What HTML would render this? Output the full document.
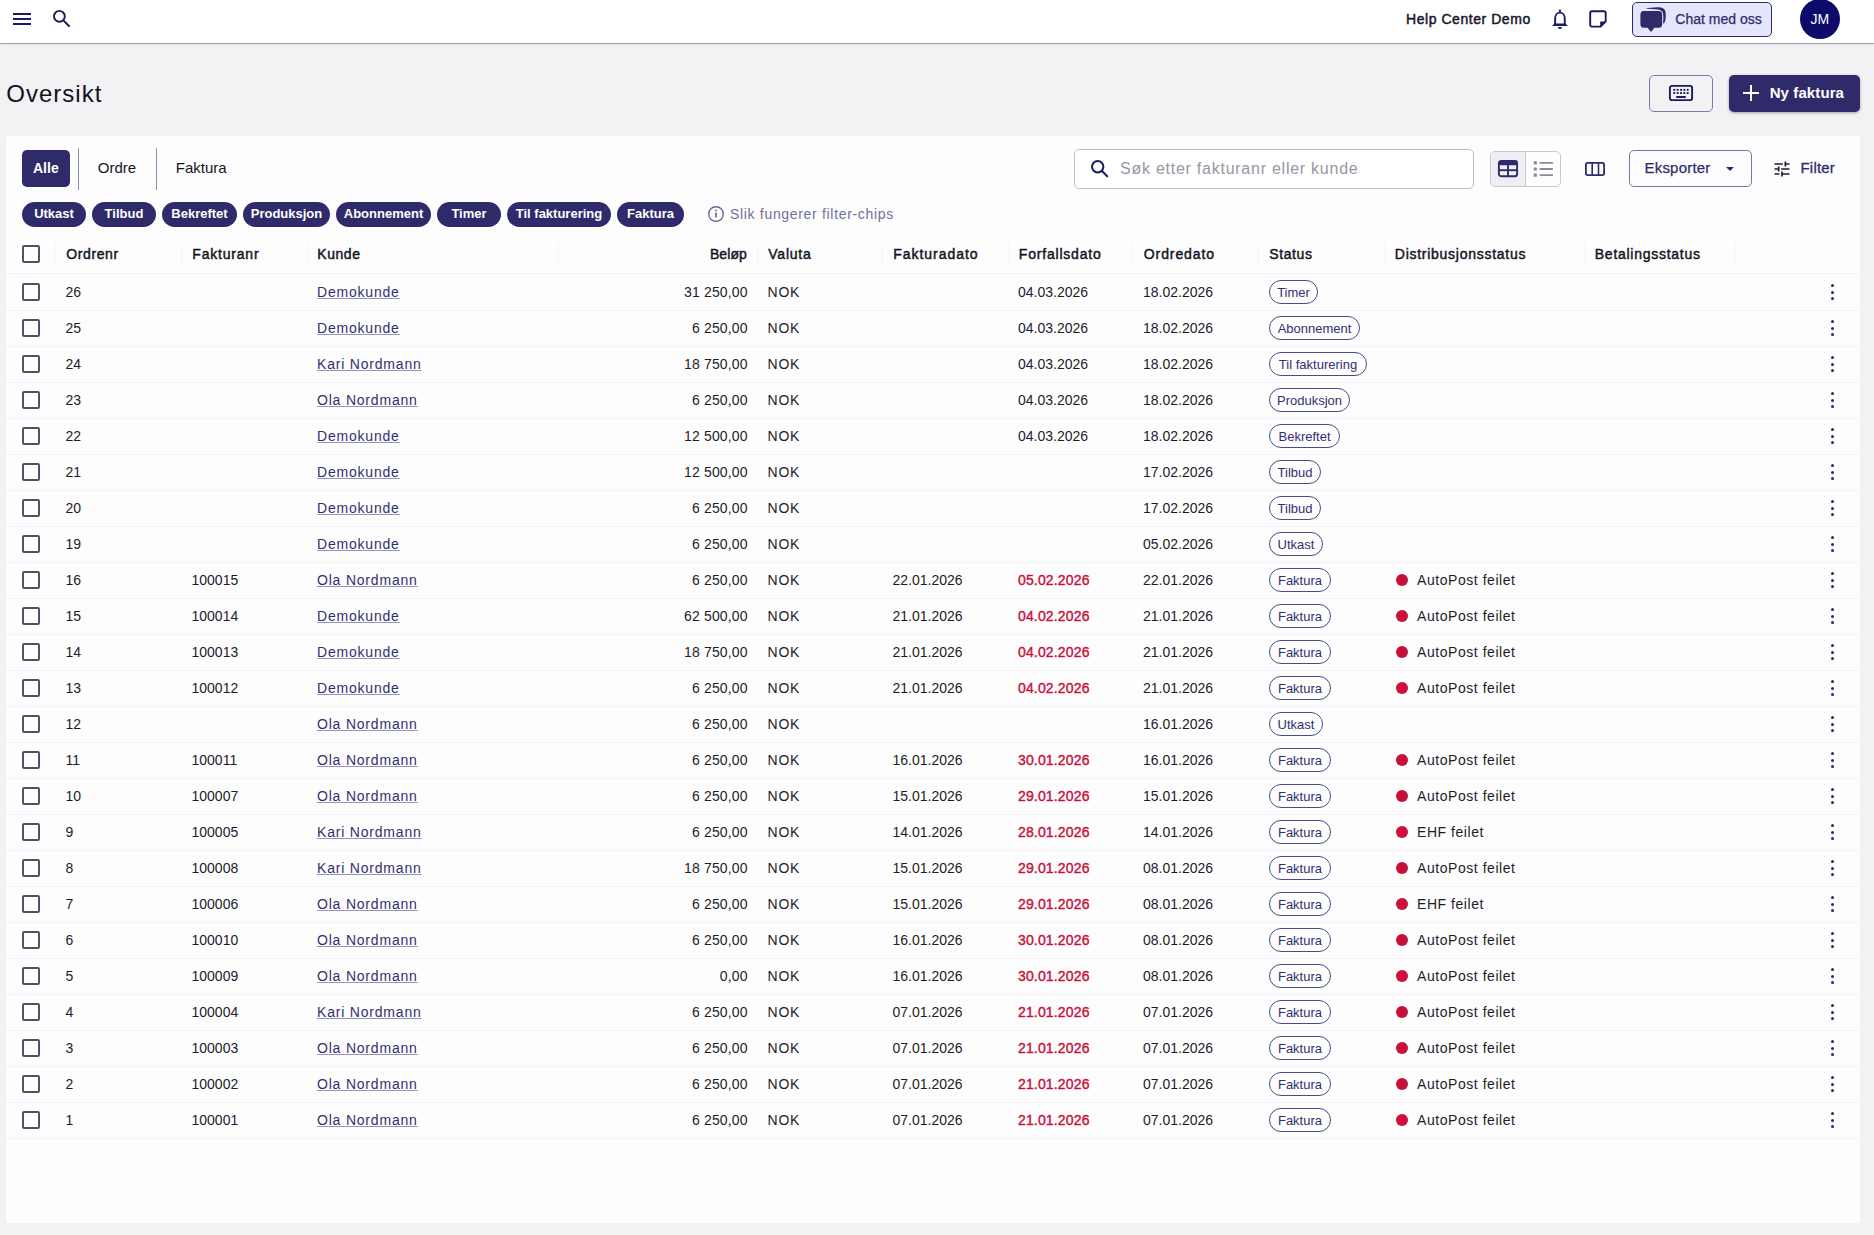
<!DOCTYPE html>
<html><head><meta charset="utf-8"><title>Oversikt</title>
<style>
html,body{margin:0;padding:0}
body{width:1874px;height:1235px;overflow:hidden;background:#f2f2f4;position:relative;font-family:"Liberation Sans",sans-serif;color:#1d1c29}
.abs{position:absolute}
.t{position:absolute;white-space:nowrap}
#hdr{position:absolute;left:0;top:0;width:1874px;height:43px;background:#fff;border-bottom:1px solid #a4a4a6;box-shadow:0 1px 2px rgba(0,0,0,.06)}
#panel{position:absolute;left:6px;top:136px;width:1854px;height:1087px;background:#fdfdfe;border-radius:3px}
.chip{position:absolute;top:202px;height:25px;border-radius:13px;background:#2f2b6b;color:#fff;font-weight:700;font-size:13px;line-height:23px;text-align:center;white-space:nowrap}
.cb{position:absolute;left:22px;width:14px;height:14px;border:2px solid #535168;border-radius:2px}
.pill{position:absolute;left:1269px;height:22px;border:1px solid #4d4a86;border-radius:12px;color:#333070;font-size:13px;line-height:23px;text-align:center;white-space:nowrap}
.lk{text-decoration:underline;text-decoration-color:#9593bf;text-underline-offset:1.2px}
</style></head><body>
<div id="hdr"></div>
<div class="abs" style="left:13px;top:13px;width:18px;height:2px;background:#1c1a5e"></div>
<div class="abs" style="left:13px;top:18px;width:18px;height:2px;background:#1c1a5e"></div>
<div class="abs" style="left:13px;top:23px;width:18px;height:2px;background:#1c1a5e"></div>
<svg class="abs" style="left:50px;top:7px" width="24" height="24" viewBox="0 0 24 24"><circle cx="9.4" cy="9.3" r="5.4" fill="none" stroke="#1c1a5e" stroke-width="1.9"/><line x1="13.4" y1="13.4" x2="19" y2="19" stroke="#1c1a5e" stroke-width="2" stroke-linecap="round"/></svg>
<div class="t" style="left:1406.00px;top:12.35px;font-size:14px;line-height:14px;color:#16152a;letter-spacing:0.55px;-webkit-text-stroke:0.45px #16152a;">Help Center Demo</div>
<svg class="abs" style="left:1550px;top:7px" width="20" height="24" viewBox="0 0 20 24"><path d="M5.15 17.2V11.5C5.15 8 7.2 5.65 9.95 5.65C12.7 5.65 14.75 8 14.75 11.5V17.2" fill="none" stroke="#1c1a5e" stroke-width="1.9"/><path d="M2.1 18.9H17.9L15.5 16.6H4.4Z" fill="#1c1a5e"/><circle cx="9.95" cy="3.7" r="1.25" fill="#1c1a5e"/><path d="M7.9 20H12A2.05 2 0 0 1 7.9 20Z" fill="#1c1a5e"/></svg>
<svg class="abs" style="left:1587px;top:8px" width="22" height="22" viewBox="0 0 22 22"><path d="M5 3.2H16.8Q18.7 3.2 18.7 5.1V13.4L13.6 18.6H5Q3.2 18.6 3.2 16.8V5Q3.2 3.2 5 3.2Z" fill="none" stroke="#1c1a5e" stroke-width="1.9" stroke-linejoin="round"/><path d="M13.2 19.3V14.3Q13.2 13.6 13.9 13.6H19.2Z" fill="#1c1a5e"/></svg>
<div class="abs" style="left:1632px;top:2px;width:138px;height:33px;border:1px solid #2f2b6b;border-radius:5px;background:#e5e5fb"></div>
<svg class="abs" style="left:1638px;top:5px" width="30" height="30" viewBox="0 0 30 30"><path d="M7 3.8Q12 2.0 21 2.2Q27.6 2.6 27.7 8L27.7 13Q27.5 17 26 18.6L25.1 18.2Q25.6 12 25.1 8.6Q24.2 5 20 4.5Q12 3.7 7 3.8Z" fill="#2f2b6b"/><path d="M5.6 6H21Q24.2 6 24.2 10V19Q24.2 22.8 21 22.8H16.4L13 27L9.6 22.8H5.6Q2.4 22.8 2.4 19V10Q2.4 6 5.6 6Z" fill="#2f2b6b"/></svg>
<div class="t" style="left:1675.30px;top:12.05px;font-size:14px;line-height:14px;color:#2f2b6b;-webkit-text-stroke:0.25px #2f2b6b;">Chat med oss</div>
<div class="abs" style="left:1800px;top:-1px;width:40px;height:40px;border-radius:50%;background:#0c0b6a"></div>
<div class="t" style="left:1810.50px;top:12.35px;font-size:14px;line-height:14px;color:#ffffff;">JM</div>
<div class="t" style="left:6.30px;top:81.68px;font-size:24px;line-height:24px;color:#121120;letter-spacing:1px;">Oversikt</div>
<div class="abs" style="left:1649px;top:75px;width:62px;height:35px;border:1px solid #7d79a8;border-radius:5px"></div>
<svg class="abs" style="left:1668px;top:84px" width="26" height="18" viewBox="0 0 26 18"><rect x="1.9" y="1.9" width="22.2" height="14.2" rx="2.2" fill="none" stroke="#1c1a5e" stroke-width="1.9"/><rect x="5.3" y="4.9" width="1.9" height="1.9" fill="#1c1a5e"/><rect x="8.7" y="4.9" width="1.9" height="1.9" fill="#1c1a5e"/><rect x="12.1" y="4.9" width="1.9" height="1.9" fill="#1c1a5e"/><rect x="15.4" y="4.9" width="1.9" height="1.9" fill="#1c1a5e"/><rect x="18.7" y="4.9" width="1.9" height="1.9" fill="#1c1a5e"/><rect x="5.3" y="8.1" width="1.9" height="1.9" fill="#1c1a5e"/><rect x="8.7" y="8.1" width="1.9" height="1.9" fill="#1c1a5e"/><rect x="12.1" y="8.1" width="1.9" height="1.9" fill="#1c1a5e"/><rect x="15.4" y="8.1" width="1.9" height="1.9" fill="#1c1a5e"/><rect x="18.7" y="8.1" width="1.9" height="1.9" fill="#1c1a5e"/><rect x="8" y="12" width="10" height="1.9" rx="0.9" fill="#1c1a5e"/></svg>
<div class="abs" style="left:1729px;top:75px;width:131px;height:37px;border-radius:5px;background:#2f2b6b;box-shadow:0 1px 3px rgba(0,0,0,.35)"></div>
<div class="abs" style="left:1750px;top:85px;width:2px;height:16px;background:#fff"></div>
<div class="abs" style="left:1743px;top:92px;width:16px;height:2px;background:#fff"></div>
<div class="t" style="left:1769.70px;top:84.80px;font-size:15px;line-height:15px;font-weight:700;color:#ffffff;letter-spacing:0.1px;">Ny faktura</div>
<div id="panel"></div>
<div class="abs" style="left:22px;top:150px;width:48px;height:37px;border-radius:5px;background:#2f2b6b"></div>
<div class="t" style="left:33.00px;top:161.15px;font-size:14px;line-height:14px;font-weight:700;color:#ffffff;">Alle</div>
<div class="abs" style="left:78px;top:148px;width:1px;height:42px;background:#8f8cb2"></div>
<div class="abs" style="left:156px;top:148px;width:1px;height:42px;background:#8f8cb2"></div>
<div class="t" style="left:97.80px;top:159.80px;font-size:15px;line-height:15px;color:#151424;">Ordre</div>
<div class="t" style="left:175.80px;top:159.80px;font-size:15px;line-height:15px;color:#151424;">Faktura</div>
<div class="chip" style="left:22px;width:64px">Utkast</div>
<div class="chip" style="left:92px;width:64px">Tilbud</div>
<div class="chip" style="left:162px;width:75px">Bekreftet</div>
<div class="chip" style="left:243px;width:87px">Produksjon</div>
<div class="chip" style="left:336px;width:95px">Abonnement</div>
<div class="chip" style="left:437px;width:64px">Timer</div>
<div class="chip" style="left:507px;width:104px">Til fakturering</div>
<div class="chip" style="left:617px;width:67px">Faktura</div>
<svg class="abs" style="left:706px;top:204px" width="20" height="20" viewBox="0 0 20 20"><circle cx="10" cy="10" r="7.3" fill="none" stroke="#6b6799" stroke-width="1.4"/><circle cx="10" cy="6.4" r="0.95" fill="#6b6799"/><rect x="9.15" y="8.6" width="1.7" height="5" rx="0.5" fill="#6b6799"/></svg>
<div class="t" style="left:730.00px;top:207.15px;font-size:14px;line-height:14px;color:#736f9a;letter-spacing:0.68px;">Slik fungerer filter-chips</div>
<div class="abs" style="left:1074px;top:149px;width:398px;height:38px;border:1px solid #bdbcc6;border-radius:5px;background:#fff"></div>
<svg class="abs" style="left:1087px;top:156px" width="26" height="26" viewBox="0 0 26 26"><circle cx="10.7" cy="10.8" r="5.7" fill="none" stroke="#1c1a5e" stroke-width="2.0"/><line x1="15" y1="15.1" x2="20.2" y2="20.3" stroke="#1c1a5e" stroke-width="2.1" stroke-linecap="round"/></svg>
<div class="t" style="left:1120.00px;top:160.96px;font-size:16px;line-height:16px;color:#9796a3;letter-spacing:0.75px;">Søk etter fakturanr eller kunde</div>
<div class="abs" style="left:1490px;top:151px;width:69px;height:34px;border:1px solid #c9c8d0;border-radius:5px;overflow:hidden"><div style="position:absolute;left:0;top:0;width:34px;height:34px;background:#efeef5;border-right:1px solid #c9c8d0"></div></div>
<svg class="abs" style="left:1497px;top:159px" width="22" height="20" viewBox="0 0 22 20"><rect x="1.9" y="1.9" width="18.2" height="15.4" rx="2.4" fill="none" stroke="#2f2b6b" stroke-width="1.9"/><rect x="1.5" y="1.5" width="19" height="4.8" rx="1.8" fill="#2f2b6b"/><line x1="11" y1="5" x2="11" y2="17" stroke="#2f2b6b" stroke-width="1.9"/><line x1="2" y1="11.2" x2="20" y2="11.2" stroke="#2f2b6b" stroke-width="1.9"/></svg>
<svg class="abs" style="left:1532px;top:160px" width="24" height="20" viewBox="0 0 24 20"><rect x="1.7" y="1.2" width="3.2" height="3.2" rx="0.6" fill="#8b8998"/><rect x="7.6" y="1.9" width="13.4" height="1.8" rx="0.5" fill="#8b8998"/><rect x="1.7" y="7.4" width="3.2" height="3.2" rx="0.6" fill="#8b8998"/><rect x="7.6" y="8.1" width="13.4" height="1.8" rx="0.5" fill="#8b8998"/><rect x="1.7" y="13.6" width="3.2" height="3.2" rx="0.6" fill="#8b8998"/><rect x="7.6" y="14.3" width="13.4" height="1.8" rx="0.5" fill="#8b8998"/></svg>
<svg class="abs" style="left:1583px;top:160px" width="24" height="18" viewBox="0 0 24 18"><rect x="2.9" y="2.9" width="18.2" height="12.2" rx="1.8" fill="none" stroke="#2f2b6b" stroke-width="1.8"/><line x1="9.2" y1="3" x2="9.2" y2="15" stroke="#2f2b6b" stroke-width="1.6"/><line x1="15.5" y1="3" x2="15.5" y2="15" stroke="#2f2b6b" stroke-width="1.6"/></svg>
<div class="abs" style="left:1629px;top:150px;width:121px;height:35px;border:1px solid #7a76a8;border-radius:5px"></div>
<div class="t" style="left:1644.50px;top:159.60px;font-size:15px;line-height:15px;color:#2f2b6b;letter-spacing:0.2px;-webkit-text-stroke:0.25px #2f2b6b;">Eksporter</div>
<div class="abs" style="left:1725.5px;top:167px;width:0;height:0;border-left:4.5px solid transparent;border-right:4.5px solid transparent;border-top:4.5px solid #2f2b6b"></div>
<svg class="abs" style="left:1771.5px;top:159px" width="20" height="20" viewBox="0 0 24 24"><path fill="#1e1d2c" d="M3 17v2h6v-2H3zM3 5v2h10V5H3zm10 16v-2h8v-2h-8v-2h-2v6h2zM7 9v2H3v2h4v2h2V9H7zm14 4v-2H11v2h10zm-6-4h2V7h4V5h-4V3h-2v6z"/></svg>
<div class="t" style="left:1800.50px;top:159.70px;font-size:15px;line-height:15px;color:#2f2b6b;letter-spacing:0.2px;-webkit-text-stroke:0.3px #2f2b6b;">Filter</div>
<div class="cb" style="top:245px"></div>
<div class="abs" style="left:55px;top:242px;width:1px;height:24px;background:#f6f6f7"></div>
<div class="abs" style="left:181px;top:242px;width:1px;height:24px;background:#f6f6f7"></div>
<div class="abs" style="left:307px;top:242px;width:1px;height:24px;background:#f6f6f7"></div>
<div class="abs" style="left:558px;top:242px;width:1px;height:24px;background:#f6f6f7"></div>
<div class="abs" style="left:757px;top:242px;width:1px;height:24px;background:#f6f6f7"></div>
<div class="abs" style="left:882px;top:242px;width:1px;height:24px;background:#f6f6f7"></div>
<div class="abs" style="left:1008px;top:242px;width:1px;height:24px;background:#f6f6f7"></div>
<div class="abs" style="left:1132px;top:242px;width:1px;height:24px;background:#f6f6f7"></div>
<div class="abs" style="left:1258px;top:242px;width:1px;height:24px;background:#f6f6f7"></div>
<div class="abs" style="left:1384px;top:242px;width:1px;height:24px;background:#f6f6f7"></div>
<div class="abs" style="left:1584px;top:242px;width:1px;height:24px;background:#f6f6f7"></div>
<div class="abs" style="left:1735px;top:242px;width:1px;height:24px;background:#f6f6f7"></div>
<div class="t" style="left:66.30px;top:246.85px;font-size:14px;line-height:14px;color:#151424;letter-spacing:0.6px;-webkit-text-stroke:0.45px #151424;">Ordrenr</div>
<div class="t" style="left:192.30px;top:246.85px;font-size:14px;line-height:14px;color:#151424;letter-spacing:0.8px;-webkit-text-stroke:0.45px #151424;">Fakturanr</div>
<div class="t" style="left:317.30px;top:246.85px;font-size:14px;line-height:14px;color:#151424;letter-spacing:0.55px;-webkit-text-stroke:0.45px #151424;">Kunde</div>
<div class="t" style="right:1127.00px;top:246.85px;font-size:14px;line-height:14px;color:#151424;letter-spacing:0.1px;-webkit-text-stroke:0.45px #151424;">Beløp</div>
<div class="t" style="left:768.30px;top:246.85px;font-size:14px;line-height:14px;color:#151424;letter-spacing:0.75px;-webkit-text-stroke:0.45px #151424;">Valuta</div>
<div class="t" style="left:893.30px;top:246.85px;font-size:14px;line-height:14px;color:#151424;letter-spacing:0.95px;-webkit-text-stroke:0.45px #151424;">Fakturadato</div>
<div class="t" style="left:1018.80px;top:246.85px;font-size:14px;line-height:14px;color:#151424;letter-spacing:0.8px;-webkit-text-stroke:0.45px #151424;">Forfallsdato</div>
<div class="t" style="left:1143.80px;top:246.85px;font-size:14px;line-height:14px;color:#151424;letter-spacing:0.9px;-webkit-text-stroke:0.45px #151424;">Ordredato</div>
<div class="t" style="left:1269.30px;top:246.85px;font-size:14px;line-height:14px;color:#151424;letter-spacing:0.6px;-webkit-text-stroke:0.45px #151424;">Status</div>
<div class="t" style="left:1394.80px;top:246.85px;font-size:14px;line-height:14px;color:#151424;letter-spacing:0.73px;-webkit-text-stroke:0.45px #151424;">Distribusjonsstatus</div>
<div class="t" style="left:1594.80px;top:246.85px;font-size:14px;line-height:14px;color:#151424;letter-spacing:0.73px;-webkit-text-stroke:0.45px #151424;">Betalingsstatus</div>
<div class="abs" style="left:6px;top:273px;width:1854px;height:1px;background:#f3f3f5"></div>
<div class="cb" style="top:283px"></div>
<div class="t" style="left:65.50px;top:285.15px;font-size:14px;line-height:14px;color:#1d1c29;">26</div>
<div class="t" style="left:317.00px;top:285.15px;font-size:14px;line-height:14px;color:#333070;letter-spacing:0.8px;"><span class="lk">Demokunde</span></div>
<div class="t" style="right:1126.30px;top:285.15px;font-size:14px;line-height:14px;color:#1d1c29;letter-spacing:0.15px;">31 250,00</div>
<div class="t" style="left:767.50px;top:285.15px;font-size:14px;line-height:14px;color:#1d1c29;letter-spacing:0.8px;">NOK</div>
<div class="t" style="left:1018.00px;top:285.15px;font-size:14px;line-height:14px;color:#1d1c29;">04.03.2026</div>
<div class="t" style="left:1143.00px;top:285.15px;font-size:14px;line-height:14px;color:#1d1c29;">18.02.2026</div>
<div class="pill" style="top:280px;width:47px">Timer</div>
<div class="abs" style="left:1830.5px;top:284.20px;width:3px;height:3px;border-radius:50%;background:#2a2869"></div>
<div class="abs" style="left:1830.5px;top:290.50px;width:3px;height:3px;border-radius:50%;background:#2a2869"></div>
<div class="abs" style="left:1830.5px;top:296.80px;width:3px;height:3px;border-radius:50%;background:#2a2869"></div>
<div class="abs" style="left:6px;top:310px;width:1854px;height:1px;background:#f4f4f6"></div>
<div class="cb" style="top:319px"></div>
<div class="t" style="left:65.50px;top:321.15px;font-size:14px;line-height:14px;color:#1d1c29;">25</div>
<div class="t" style="left:317.00px;top:321.15px;font-size:14px;line-height:14px;color:#333070;letter-spacing:0.8px;"><span class="lk">Demokunde</span></div>
<div class="t" style="right:1126.30px;top:321.15px;font-size:14px;line-height:14px;color:#1d1c29;letter-spacing:0.15px;">6 250,00</div>
<div class="t" style="left:767.50px;top:321.15px;font-size:14px;line-height:14px;color:#1d1c29;letter-spacing:0.8px;">NOK</div>
<div class="t" style="left:1018.00px;top:321.15px;font-size:14px;line-height:14px;color:#1d1c29;">04.03.2026</div>
<div class="t" style="left:1143.00px;top:321.15px;font-size:14px;line-height:14px;color:#1d1c29;">18.02.2026</div>
<div class="pill" style="top:316px;width:89px">Abonnement</div>
<div class="abs" style="left:1830.5px;top:320.20px;width:3px;height:3px;border-radius:50%;background:#2a2869"></div>
<div class="abs" style="left:1830.5px;top:326.50px;width:3px;height:3px;border-radius:50%;background:#2a2869"></div>
<div class="abs" style="left:1830.5px;top:332.80px;width:3px;height:3px;border-radius:50%;background:#2a2869"></div>
<div class="abs" style="left:6px;top:346px;width:1854px;height:1px;background:#f4f4f6"></div>
<div class="cb" style="top:355px"></div>
<div class="t" style="left:65.50px;top:357.15px;font-size:14px;line-height:14px;color:#1d1c29;">24</div>
<div class="t" style="left:317.00px;top:357.15px;font-size:14px;line-height:14px;color:#333070;letter-spacing:0.8px;"><span class="lk">Kari Nordmann</span></div>
<div class="t" style="right:1126.30px;top:357.15px;font-size:14px;line-height:14px;color:#1d1c29;letter-spacing:0.15px;">18 750,00</div>
<div class="t" style="left:767.50px;top:357.15px;font-size:14px;line-height:14px;color:#1d1c29;letter-spacing:0.8px;">NOK</div>
<div class="t" style="left:1018.00px;top:357.15px;font-size:14px;line-height:14px;color:#1d1c29;">04.03.2026</div>
<div class="t" style="left:1143.00px;top:357.15px;font-size:14px;line-height:14px;color:#1d1c29;">18.02.2026</div>
<div class="pill" style="top:352px;width:96px">Til fakturering</div>
<div class="abs" style="left:1830.5px;top:356.20px;width:3px;height:3px;border-radius:50%;background:#2a2869"></div>
<div class="abs" style="left:1830.5px;top:362.50px;width:3px;height:3px;border-radius:50%;background:#2a2869"></div>
<div class="abs" style="left:1830.5px;top:368.80px;width:3px;height:3px;border-radius:50%;background:#2a2869"></div>
<div class="abs" style="left:6px;top:382px;width:1854px;height:1px;background:#f4f4f6"></div>
<div class="cb" style="top:391px"></div>
<div class="t" style="left:65.50px;top:393.15px;font-size:14px;line-height:14px;color:#1d1c29;">23</div>
<div class="t" style="left:317.00px;top:393.15px;font-size:14px;line-height:14px;color:#333070;letter-spacing:0.8px;"><span class="lk">Ola Nordmann</span></div>
<div class="t" style="right:1126.30px;top:393.15px;font-size:14px;line-height:14px;color:#1d1c29;letter-spacing:0.15px;">6 250,00</div>
<div class="t" style="left:767.50px;top:393.15px;font-size:14px;line-height:14px;color:#1d1c29;letter-spacing:0.8px;">NOK</div>
<div class="t" style="left:1018.00px;top:393.15px;font-size:14px;line-height:14px;color:#1d1c29;">04.03.2026</div>
<div class="t" style="left:1143.00px;top:393.15px;font-size:14px;line-height:14px;color:#1d1c29;">18.02.2026</div>
<div class="pill" style="top:388px;width:79px">Produksjon</div>
<div class="abs" style="left:1830.5px;top:392.20px;width:3px;height:3px;border-radius:50%;background:#2a2869"></div>
<div class="abs" style="left:1830.5px;top:398.50px;width:3px;height:3px;border-radius:50%;background:#2a2869"></div>
<div class="abs" style="left:1830.5px;top:404.80px;width:3px;height:3px;border-radius:50%;background:#2a2869"></div>
<div class="abs" style="left:6px;top:418px;width:1854px;height:1px;background:#f4f4f6"></div>
<div class="cb" style="top:427px"></div>
<div class="t" style="left:65.50px;top:429.15px;font-size:14px;line-height:14px;color:#1d1c29;">22</div>
<div class="t" style="left:317.00px;top:429.15px;font-size:14px;line-height:14px;color:#333070;letter-spacing:0.8px;"><span class="lk">Demokunde</span></div>
<div class="t" style="right:1126.30px;top:429.15px;font-size:14px;line-height:14px;color:#1d1c29;letter-spacing:0.15px;">12 500,00</div>
<div class="t" style="left:767.50px;top:429.15px;font-size:14px;line-height:14px;color:#1d1c29;letter-spacing:0.8px;">NOK</div>
<div class="t" style="left:1018.00px;top:429.15px;font-size:14px;line-height:14px;color:#1d1c29;">04.03.2026</div>
<div class="t" style="left:1143.00px;top:429.15px;font-size:14px;line-height:14px;color:#1d1c29;">18.02.2026</div>
<div class="pill" style="top:424px;width:69px">Bekreftet</div>
<div class="abs" style="left:1830.5px;top:428.20px;width:3px;height:3px;border-radius:50%;background:#2a2869"></div>
<div class="abs" style="left:1830.5px;top:434.50px;width:3px;height:3px;border-radius:50%;background:#2a2869"></div>
<div class="abs" style="left:1830.5px;top:440.80px;width:3px;height:3px;border-radius:50%;background:#2a2869"></div>
<div class="abs" style="left:6px;top:454px;width:1854px;height:1px;background:#f4f4f6"></div>
<div class="cb" style="top:463px"></div>
<div class="t" style="left:65.50px;top:465.15px;font-size:14px;line-height:14px;color:#1d1c29;">21</div>
<div class="t" style="left:317.00px;top:465.15px;font-size:14px;line-height:14px;color:#333070;letter-spacing:0.8px;"><span class="lk">Demokunde</span></div>
<div class="t" style="right:1126.30px;top:465.15px;font-size:14px;line-height:14px;color:#1d1c29;letter-spacing:0.15px;">12 500,00</div>
<div class="t" style="left:767.50px;top:465.15px;font-size:14px;line-height:14px;color:#1d1c29;letter-spacing:0.8px;">NOK</div>
<div class="t" style="left:1143.00px;top:465.15px;font-size:14px;line-height:14px;color:#1d1c29;">17.02.2026</div>
<div class="pill" style="top:460px;width:50px">Tilbud</div>
<div class="abs" style="left:1830.5px;top:464.20px;width:3px;height:3px;border-radius:50%;background:#2a2869"></div>
<div class="abs" style="left:1830.5px;top:470.50px;width:3px;height:3px;border-radius:50%;background:#2a2869"></div>
<div class="abs" style="left:1830.5px;top:476.80px;width:3px;height:3px;border-radius:50%;background:#2a2869"></div>
<div class="abs" style="left:6px;top:490px;width:1854px;height:1px;background:#f4f4f6"></div>
<div class="cb" style="top:499px"></div>
<div class="t" style="left:65.50px;top:501.15px;font-size:14px;line-height:14px;color:#1d1c29;">20</div>
<div class="t" style="left:317.00px;top:501.15px;font-size:14px;line-height:14px;color:#333070;letter-spacing:0.8px;"><span class="lk">Demokunde</span></div>
<div class="t" style="right:1126.30px;top:501.15px;font-size:14px;line-height:14px;color:#1d1c29;letter-spacing:0.15px;">6 250,00</div>
<div class="t" style="left:767.50px;top:501.15px;font-size:14px;line-height:14px;color:#1d1c29;letter-spacing:0.8px;">NOK</div>
<div class="t" style="left:1143.00px;top:501.15px;font-size:14px;line-height:14px;color:#1d1c29;">17.02.2026</div>
<div class="pill" style="top:496px;width:50px">Tilbud</div>
<div class="abs" style="left:1830.5px;top:500.20px;width:3px;height:3px;border-radius:50%;background:#2a2869"></div>
<div class="abs" style="left:1830.5px;top:506.50px;width:3px;height:3px;border-radius:50%;background:#2a2869"></div>
<div class="abs" style="left:1830.5px;top:512.80px;width:3px;height:3px;border-radius:50%;background:#2a2869"></div>
<div class="abs" style="left:6px;top:526px;width:1854px;height:1px;background:#f4f4f6"></div>
<div class="cb" style="top:535px"></div>
<div class="t" style="left:65.50px;top:537.15px;font-size:14px;line-height:14px;color:#1d1c29;">19</div>
<div class="t" style="left:317.00px;top:537.15px;font-size:14px;line-height:14px;color:#333070;letter-spacing:0.8px;"><span class="lk">Demokunde</span></div>
<div class="t" style="right:1126.30px;top:537.15px;font-size:14px;line-height:14px;color:#1d1c29;letter-spacing:0.15px;">6 250,00</div>
<div class="t" style="left:767.50px;top:537.15px;font-size:14px;line-height:14px;color:#1d1c29;letter-spacing:0.8px;">NOK</div>
<div class="t" style="left:1143.00px;top:537.15px;font-size:14px;line-height:14px;color:#1d1c29;">05.02.2026</div>
<div class="pill" style="top:532px;width:52px">Utkast</div>
<div class="abs" style="left:1830.5px;top:536.20px;width:3px;height:3px;border-radius:50%;background:#2a2869"></div>
<div class="abs" style="left:1830.5px;top:542.50px;width:3px;height:3px;border-radius:50%;background:#2a2869"></div>
<div class="abs" style="left:1830.5px;top:548.80px;width:3px;height:3px;border-radius:50%;background:#2a2869"></div>
<div class="abs" style="left:6px;top:562px;width:1854px;height:1px;background:#f4f4f6"></div>
<div class="cb" style="top:571px"></div>
<div class="t" style="left:65.50px;top:573.15px;font-size:14px;line-height:14px;color:#1d1c29;">16</div>
<div class="t" style="left:191.50px;top:573.15px;font-size:14px;line-height:14px;color:#1d1c29;">100015</div>
<div class="t" style="left:317.00px;top:573.15px;font-size:14px;line-height:14px;color:#333070;letter-spacing:0.8px;"><span class="lk">Ola Nordmann</span></div>
<div class="t" style="right:1126.30px;top:573.15px;font-size:14px;line-height:14px;color:#1d1c29;letter-spacing:0.15px;">6 250,00</div>
<div class="t" style="left:767.50px;top:573.15px;font-size:14px;line-height:14px;color:#1d1c29;letter-spacing:0.8px;">NOK</div>
<div class="t" style="left:892.50px;top:573.15px;font-size:14px;line-height:14px;color:#1d1c29;">22.01.2026</div>
<div class="t" style="left:1018.00px;top:573.15px;font-size:14px;line-height:14px;color:#c8103b;letter-spacing:0.15px;-webkit-text-stroke:0.4px #c8103b;">05.02.2026</div>
<div class="t" style="left:1143.00px;top:573.15px;font-size:14px;line-height:14px;color:#1d1c29;">22.01.2026</div>
<div class="pill" style="top:568px;width:60px">Faktura</div>
<div class="abs" style="left:1396px;top:574px;width:12px;height:12px;border-radius:50%;background:#c8103b"></div>
<div class="t" style="left:1417.00px;top:573.15px;font-size:14px;line-height:14px;color:#1d1c29;letter-spacing:0.55px;">AutoPost feilet</div>
<div class="abs" style="left:1830.5px;top:572.20px;width:3px;height:3px;border-radius:50%;background:#2a2869"></div>
<div class="abs" style="left:1830.5px;top:578.50px;width:3px;height:3px;border-radius:50%;background:#2a2869"></div>
<div class="abs" style="left:1830.5px;top:584.80px;width:3px;height:3px;border-radius:50%;background:#2a2869"></div>
<div class="abs" style="left:6px;top:598px;width:1854px;height:1px;background:#f4f4f6"></div>
<div class="cb" style="top:607px"></div>
<div class="t" style="left:65.50px;top:609.15px;font-size:14px;line-height:14px;color:#1d1c29;">15</div>
<div class="t" style="left:191.50px;top:609.15px;font-size:14px;line-height:14px;color:#1d1c29;">100014</div>
<div class="t" style="left:317.00px;top:609.15px;font-size:14px;line-height:14px;color:#333070;letter-spacing:0.8px;"><span class="lk">Demokunde</span></div>
<div class="t" style="right:1126.30px;top:609.15px;font-size:14px;line-height:14px;color:#1d1c29;letter-spacing:0.15px;">62 500,00</div>
<div class="t" style="left:767.50px;top:609.15px;font-size:14px;line-height:14px;color:#1d1c29;letter-spacing:0.8px;">NOK</div>
<div class="t" style="left:892.50px;top:609.15px;font-size:14px;line-height:14px;color:#1d1c29;">21.01.2026</div>
<div class="t" style="left:1018.00px;top:609.15px;font-size:14px;line-height:14px;color:#c8103b;letter-spacing:0.15px;-webkit-text-stroke:0.4px #c8103b;">04.02.2026</div>
<div class="t" style="left:1143.00px;top:609.15px;font-size:14px;line-height:14px;color:#1d1c29;">21.01.2026</div>
<div class="pill" style="top:604px;width:60px">Faktura</div>
<div class="abs" style="left:1396px;top:610px;width:12px;height:12px;border-radius:50%;background:#c8103b"></div>
<div class="t" style="left:1417.00px;top:609.15px;font-size:14px;line-height:14px;color:#1d1c29;letter-spacing:0.55px;">AutoPost feilet</div>
<div class="abs" style="left:1830.5px;top:608.20px;width:3px;height:3px;border-radius:50%;background:#2a2869"></div>
<div class="abs" style="left:1830.5px;top:614.50px;width:3px;height:3px;border-radius:50%;background:#2a2869"></div>
<div class="abs" style="left:1830.5px;top:620.80px;width:3px;height:3px;border-radius:50%;background:#2a2869"></div>
<div class="abs" style="left:6px;top:634px;width:1854px;height:1px;background:#f4f4f6"></div>
<div class="cb" style="top:643px"></div>
<div class="t" style="left:65.50px;top:645.15px;font-size:14px;line-height:14px;color:#1d1c29;">14</div>
<div class="t" style="left:191.50px;top:645.15px;font-size:14px;line-height:14px;color:#1d1c29;">100013</div>
<div class="t" style="left:317.00px;top:645.15px;font-size:14px;line-height:14px;color:#333070;letter-spacing:0.8px;"><span class="lk">Demokunde</span></div>
<div class="t" style="right:1126.30px;top:645.15px;font-size:14px;line-height:14px;color:#1d1c29;letter-spacing:0.15px;">18 750,00</div>
<div class="t" style="left:767.50px;top:645.15px;font-size:14px;line-height:14px;color:#1d1c29;letter-spacing:0.8px;">NOK</div>
<div class="t" style="left:892.50px;top:645.15px;font-size:14px;line-height:14px;color:#1d1c29;">21.01.2026</div>
<div class="t" style="left:1018.00px;top:645.15px;font-size:14px;line-height:14px;color:#c8103b;letter-spacing:0.15px;-webkit-text-stroke:0.4px #c8103b;">04.02.2026</div>
<div class="t" style="left:1143.00px;top:645.15px;font-size:14px;line-height:14px;color:#1d1c29;">21.01.2026</div>
<div class="pill" style="top:640px;width:60px">Faktura</div>
<div class="abs" style="left:1396px;top:646px;width:12px;height:12px;border-radius:50%;background:#c8103b"></div>
<div class="t" style="left:1417.00px;top:645.15px;font-size:14px;line-height:14px;color:#1d1c29;letter-spacing:0.55px;">AutoPost feilet</div>
<div class="abs" style="left:1830.5px;top:644.20px;width:3px;height:3px;border-radius:50%;background:#2a2869"></div>
<div class="abs" style="left:1830.5px;top:650.50px;width:3px;height:3px;border-radius:50%;background:#2a2869"></div>
<div class="abs" style="left:1830.5px;top:656.80px;width:3px;height:3px;border-radius:50%;background:#2a2869"></div>
<div class="abs" style="left:6px;top:670px;width:1854px;height:1px;background:#f4f4f6"></div>
<div class="cb" style="top:679px"></div>
<div class="t" style="left:65.50px;top:681.15px;font-size:14px;line-height:14px;color:#1d1c29;">13</div>
<div class="t" style="left:191.50px;top:681.15px;font-size:14px;line-height:14px;color:#1d1c29;">100012</div>
<div class="t" style="left:317.00px;top:681.15px;font-size:14px;line-height:14px;color:#333070;letter-spacing:0.8px;"><span class="lk">Demokunde</span></div>
<div class="t" style="right:1126.30px;top:681.15px;font-size:14px;line-height:14px;color:#1d1c29;letter-spacing:0.15px;">6 250,00</div>
<div class="t" style="left:767.50px;top:681.15px;font-size:14px;line-height:14px;color:#1d1c29;letter-spacing:0.8px;">NOK</div>
<div class="t" style="left:892.50px;top:681.15px;font-size:14px;line-height:14px;color:#1d1c29;">21.01.2026</div>
<div class="t" style="left:1018.00px;top:681.15px;font-size:14px;line-height:14px;color:#c8103b;letter-spacing:0.15px;-webkit-text-stroke:0.4px #c8103b;">04.02.2026</div>
<div class="t" style="left:1143.00px;top:681.15px;font-size:14px;line-height:14px;color:#1d1c29;">21.01.2026</div>
<div class="pill" style="top:676px;width:60px">Faktura</div>
<div class="abs" style="left:1396px;top:682px;width:12px;height:12px;border-radius:50%;background:#c8103b"></div>
<div class="t" style="left:1417.00px;top:681.15px;font-size:14px;line-height:14px;color:#1d1c29;letter-spacing:0.55px;">AutoPost feilet</div>
<div class="abs" style="left:1830.5px;top:680.20px;width:3px;height:3px;border-radius:50%;background:#2a2869"></div>
<div class="abs" style="left:1830.5px;top:686.50px;width:3px;height:3px;border-radius:50%;background:#2a2869"></div>
<div class="abs" style="left:1830.5px;top:692.80px;width:3px;height:3px;border-radius:50%;background:#2a2869"></div>
<div class="abs" style="left:6px;top:706px;width:1854px;height:1px;background:#f4f4f6"></div>
<div class="cb" style="top:715px"></div>
<div class="t" style="left:65.50px;top:717.15px;font-size:14px;line-height:14px;color:#1d1c29;">12</div>
<div class="t" style="left:317.00px;top:717.15px;font-size:14px;line-height:14px;color:#333070;letter-spacing:0.8px;"><span class="lk">Ola Nordmann</span></div>
<div class="t" style="right:1126.30px;top:717.15px;font-size:14px;line-height:14px;color:#1d1c29;letter-spacing:0.15px;">6 250,00</div>
<div class="t" style="left:767.50px;top:717.15px;font-size:14px;line-height:14px;color:#1d1c29;letter-spacing:0.8px;">NOK</div>
<div class="t" style="left:1143.00px;top:717.15px;font-size:14px;line-height:14px;color:#1d1c29;">16.01.2026</div>
<div class="pill" style="top:712px;width:52px">Utkast</div>
<div class="abs" style="left:1830.5px;top:716.20px;width:3px;height:3px;border-radius:50%;background:#2a2869"></div>
<div class="abs" style="left:1830.5px;top:722.50px;width:3px;height:3px;border-radius:50%;background:#2a2869"></div>
<div class="abs" style="left:1830.5px;top:728.80px;width:3px;height:3px;border-radius:50%;background:#2a2869"></div>
<div class="abs" style="left:6px;top:742px;width:1854px;height:1px;background:#f4f4f6"></div>
<div class="cb" style="top:751px"></div>
<div class="t" style="left:65.50px;top:753.15px;font-size:14px;line-height:14px;color:#1d1c29;">11</div>
<div class="t" style="left:191.50px;top:753.15px;font-size:14px;line-height:14px;color:#1d1c29;">100011</div>
<div class="t" style="left:317.00px;top:753.15px;font-size:14px;line-height:14px;color:#333070;letter-spacing:0.8px;"><span class="lk">Ola Nordmann</span></div>
<div class="t" style="right:1126.30px;top:753.15px;font-size:14px;line-height:14px;color:#1d1c29;letter-spacing:0.15px;">6 250,00</div>
<div class="t" style="left:767.50px;top:753.15px;font-size:14px;line-height:14px;color:#1d1c29;letter-spacing:0.8px;">NOK</div>
<div class="t" style="left:892.50px;top:753.15px;font-size:14px;line-height:14px;color:#1d1c29;">16.01.2026</div>
<div class="t" style="left:1018.00px;top:753.15px;font-size:14px;line-height:14px;color:#c8103b;letter-spacing:0.15px;-webkit-text-stroke:0.4px #c8103b;">30.01.2026</div>
<div class="t" style="left:1143.00px;top:753.15px;font-size:14px;line-height:14px;color:#1d1c29;">16.01.2026</div>
<div class="pill" style="top:748px;width:60px">Faktura</div>
<div class="abs" style="left:1396px;top:754px;width:12px;height:12px;border-radius:50%;background:#c8103b"></div>
<div class="t" style="left:1417.00px;top:753.15px;font-size:14px;line-height:14px;color:#1d1c29;letter-spacing:0.55px;">AutoPost feilet</div>
<div class="abs" style="left:1830.5px;top:752.20px;width:3px;height:3px;border-radius:50%;background:#2a2869"></div>
<div class="abs" style="left:1830.5px;top:758.50px;width:3px;height:3px;border-radius:50%;background:#2a2869"></div>
<div class="abs" style="left:1830.5px;top:764.80px;width:3px;height:3px;border-radius:50%;background:#2a2869"></div>
<div class="abs" style="left:6px;top:778px;width:1854px;height:1px;background:#f4f4f6"></div>
<div class="cb" style="top:787px"></div>
<div class="t" style="left:65.50px;top:789.15px;font-size:14px;line-height:14px;color:#1d1c29;">10</div>
<div class="t" style="left:191.50px;top:789.15px;font-size:14px;line-height:14px;color:#1d1c29;">100007</div>
<div class="t" style="left:317.00px;top:789.15px;font-size:14px;line-height:14px;color:#333070;letter-spacing:0.8px;"><span class="lk">Ola Nordmann</span></div>
<div class="t" style="right:1126.30px;top:789.15px;font-size:14px;line-height:14px;color:#1d1c29;letter-spacing:0.15px;">6 250,00</div>
<div class="t" style="left:767.50px;top:789.15px;font-size:14px;line-height:14px;color:#1d1c29;letter-spacing:0.8px;">NOK</div>
<div class="t" style="left:892.50px;top:789.15px;font-size:14px;line-height:14px;color:#1d1c29;">15.01.2026</div>
<div class="t" style="left:1018.00px;top:789.15px;font-size:14px;line-height:14px;color:#c8103b;letter-spacing:0.15px;-webkit-text-stroke:0.4px #c8103b;">29.01.2026</div>
<div class="t" style="left:1143.00px;top:789.15px;font-size:14px;line-height:14px;color:#1d1c29;">15.01.2026</div>
<div class="pill" style="top:784px;width:60px">Faktura</div>
<div class="abs" style="left:1396px;top:790px;width:12px;height:12px;border-radius:50%;background:#c8103b"></div>
<div class="t" style="left:1417.00px;top:789.15px;font-size:14px;line-height:14px;color:#1d1c29;letter-spacing:0.55px;">AutoPost feilet</div>
<div class="abs" style="left:1830.5px;top:788.20px;width:3px;height:3px;border-radius:50%;background:#2a2869"></div>
<div class="abs" style="left:1830.5px;top:794.50px;width:3px;height:3px;border-radius:50%;background:#2a2869"></div>
<div class="abs" style="left:1830.5px;top:800.80px;width:3px;height:3px;border-radius:50%;background:#2a2869"></div>
<div class="abs" style="left:6px;top:814px;width:1854px;height:1px;background:#f4f4f6"></div>
<div class="cb" style="top:823px"></div>
<div class="t" style="left:65.50px;top:825.15px;font-size:14px;line-height:14px;color:#1d1c29;">9</div>
<div class="t" style="left:191.50px;top:825.15px;font-size:14px;line-height:14px;color:#1d1c29;">100005</div>
<div class="t" style="left:317.00px;top:825.15px;font-size:14px;line-height:14px;color:#333070;letter-spacing:0.8px;"><span class="lk">Kari Nordmann</span></div>
<div class="t" style="right:1126.30px;top:825.15px;font-size:14px;line-height:14px;color:#1d1c29;letter-spacing:0.15px;">6 250,00</div>
<div class="t" style="left:767.50px;top:825.15px;font-size:14px;line-height:14px;color:#1d1c29;letter-spacing:0.8px;">NOK</div>
<div class="t" style="left:892.50px;top:825.15px;font-size:14px;line-height:14px;color:#1d1c29;">14.01.2026</div>
<div class="t" style="left:1018.00px;top:825.15px;font-size:14px;line-height:14px;color:#c8103b;letter-spacing:0.15px;-webkit-text-stroke:0.4px #c8103b;">28.01.2026</div>
<div class="t" style="left:1143.00px;top:825.15px;font-size:14px;line-height:14px;color:#1d1c29;">14.01.2026</div>
<div class="pill" style="top:820px;width:60px">Faktura</div>
<div class="abs" style="left:1396px;top:826px;width:12px;height:12px;border-radius:50%;background:#c8103b"></div>
<div class="t" style="left:1417.00px;top:825.15px;font-size:14px;line-height:14px;color:#1d1c29;letter-spacing:0.55px;">EHF feilet</div>
<div class="abs" style="left:1830.5px;top:824.20px;width:3px;height:3px;border-radius:50%;background:#2a2869"></div>
<div class="abs" style="left:1830.5px;top:830.50px;width:3px;height:3px;border-radius:50%;background:#2a2869"></div>
<div class="abs" style="left:1830.5px;top:836.80px;width:3px;height:3px;border-radius:50%;background:#2a2869"></div>
<div class="abs" style="left:6px;top:850px;width:1854px;height:1px;background:#f4f4f6"></div>
<div class="cb" style="top:859px"></div>
<div class="t" style="left:65.50px;top:861.15px;font-size:14px;line-height:14px;color:#1d1c29;">8</div>
<div class="t" style="left:191.50px;top:861.15px;font-size:14px;line-height:14px;color:#1d1c29;">100008</div>
<div class="t" style="left:317.00px;top:861.15px;font-size:14px;line-height:14px;color:#333070;letter-spacing:0.8px;"><span class="lk">Kari Nordmann</span></div>
<div class="t" style="right:1126.30px;top:861.15px;font-size:14px;line-height:14px;color:#1d1c29;letter-spacing:0.15px;">18 750,00</div>
<div class="t" style="left:767.50px;top:861.15px;font-size:14px;line-height:14px;color:#1d1c29;letter-spacing:0.8px;">NOK</div>
<div class="t" style="left:892.50px;top:861.15px;font-size:14px;line-height:14px;color:#1d1c29;">15.01.2026</div>
<div class="t" style="left:1018.00px;top:861.15px;font-size:14px;line-height:14px;color:#c8103b;letter-spacing:0.15px;-webkit-text-stroke:0.4px #c8103b;">29.01.2026</div>
<div class="t" style="left:1143.00px;top:861.15px;font-size:14px;line-height:14px;color:#1d1c29;">08.01.2026</div>
<div class="pill" style="top:856px;width:60px">Faktura</div>
<div class="abs" style="left:1396px;top:862px;width:12px;height:12px;border-radius:50%;background:#c8103b"></div>
<div class="t" style="left:1417.00px;top:861.15px;font-size:14px;line-height:14px;color:#1d1c29;letter-spacing:0.55px;">AutoPost feilet</div>
<div class="abs" style="left:1830.5px;top:860.20px;width:3px;height:3px;border-radius:50%;background:#2a2869"></div>
<div class="abs" style="left:1830.5px;top:866.50px;width:3px;height:3px;border-radius:50%;background:#2a2869"></div>
<div class="abs" style="left:1830.5px;top:872.80px;width:3px;height:3px;border-radius:50%;background:#2a2869"></div>
<div class="abs" style="left:6px;top:886px;width:1854px;height:1px;background:#f4f4f6"></div>
<div class="cb" style="top:895px"></div>
<div class="t" style="left:65.50px;top:897.15px;font-size:14px;line-height:14px;color:#1d1c29;">7</div>
<div class="t" style="left:191.50px;top:897.15px;font-size:14px;line-height:14px;color:#1d1c29;">100006</div>
<div class="t" style="left:317.00px;top:897.15px;font-size:14px;line-height:14px;color:#333070;letter-spacing:0.8px;"><span class="lk">Ola Nordmann</span></div>
<div class="t" style="right:1126.30px;top:897.15px;font-size:14px;line-height:14px;color:#1d1c29;letter-spacing:0.15px;">6 250,00</div>
<div class="t" style="left:767.50px;top:897.15px;font-size:14px;line-height:14px;color:#1d1c29;letter-spacing:0.8px;">NOK</div>
<div class="t" style="left:892.50px;top:897.15px;font-size:14px;line-height:14px;color:#1d1c29;">15.01.2026</div>
<div class="t" style="left:1018.00px;top:897.15px;font-size:14px;line-height:14px;color:#c8103b;letter-spacing:0.15px;-webkit-text-stroke:0.4px #c8103b;">29.01.2026</div>
<div class="t" style="left:1143.00px;top:897.15px;font-size:14px;line-height:14px;color:#1d1c29;">08.01.2026</div>
<div class="pill" style="top:892px;width:60px">Faktura</div>
<div class="abs" style="left:1396px;top:898px;width:12px;height:12px;border-radius:50%;background:#c8103b"></div>
<div class="t" style="left:1417.00px;top:897.15px;font-size:14px;line-height:14px;color:#1d1c29;letter-spacing:0.55px;">EHF feilet</div>
<div class="abs" style="left:1830.5px;top:896.20px;width:3px;height:3px;border-radius:50%;background:#2a2869"></div>
<div class="abs" style="left:1830.5px;top:902.50px;width:3px;height:3px;border-radius:50%;background:#2a2869"></div>
<div class="abs" style="left:1830.5px;top:908.80px;width:3px;height:3px;border-radius:50%;background:#2a2869"></div>
<div class="abs" style="left:6px;top:922px;width:1854px;height:1px;background:#f4f4f6"></div>
<div class="cb" style="top:931px"></div>
<div class="t" style="left:65.50px;top:933.15px;font-size:14px;line-height:14px;color:#1d1c29;">6</div>
<div class="t" style="left:191.50px;top:933.15px;font-size:14px;line-height:14px;color:#1d1c29;">100010</div>
<div class="t" style="left:317.00px;top:933.15px;font-size:14px;line-height:14px;color:#333070;letter-spacing:0.8px;"><span class="lk">Ola Nordmann</span></div>
<div class="t" style="right:1126.30px;top:933.15px;font-size:14px;line-height:14px;color:#1d1c29;letter-spacing:0.15px;">6 250,00</div>
<div class="t" style="left:767.50px;top:933.15px;font-size:14px;line-height:14px;color:#1d1c29;letter-spacing:0.8px;">NOK</div>
<div class="t" style="left:892.50px;top:933.15px;font-size:14px;line-height:14px;color:#1d1c29;">16.01.2026</div>
<div class="t" style="left:1018.00px;top:933.15px;font-size:14px;line-height:14px;color:#c8103b;letter-spacing:0.15px;-webkit-text-stroke:0.4px #c8103b;">30.01.2026</div>
<div class="t" style="left:1143.00px;top:933.15px;font-size:14px;line-height:14px;color:#1d1c29;">08.01.2026</div>
<div class="pill" style="top:928px;width:60px">Faktura</div>
<div class="abs" style="left:1396px;top:934px;width:12px;height:12px;border-radius:50%;background:#c8103b"></div>
<div class="t" style="left:1417.00px;top:933.15px;font-size:14px;line-height:14px;color:#1d1c29;letter-spacing:0.55px;">AutoPost feilet</div>
<div class="abs" style="left:1830.5px;top:932.20px;width:3px;height:3px;border-radius:50%;background:#2a2869"></div>
<div class="abs" style="left:1830.5px;top:938.50px;width:3px;height:3px;border-radius:50%;background:#2a2869"></div>
<div class="abs" style="left:1830.5px;top:944.80px;width:3px;height:3px;border-radius:50%;background:#2a2869"></div>
<div class="abs" style="left:6px;top:958px;width:1854px;height:1px;background:#f4f4f6"></div>
<div class="cb" style="top:967px"></div>
<div class="t" style="left:65.50px;top:969.15px;font-size:14px;line-height:14px;color:#1d1c29;">5</div>
<div class="t" style="left:191.50px;top:969.15px;font-size:14px;line-height:14px;color:#1d1c29;">100009</div>
<div class="t" style="left:317.00px;top:969.15px;font-size:14px;line-height:14px;color:#333070;letter-spacing:0.8px;"><span class="lk">Ola Nordmann</span></div>
<div class="t" style="right:1126.30px;top:969.15px;font-size:14px;line-height:14px;color:#1d1c29;letter-spacing:0.15px;">0,00</div>
<div class="t" style="left:767.50px;top:969.15px;font-size:14px;line-height:14px;color:#1d1c29;letter-spacing:0.8px;">NOK</div>
<div class="t" style="left:892.50px;top:969.15px;font-size:14px;line-height:14px;color:#1d1c29;">16.01.2026</div>
<div class="t" style="left:1018.00px;top:969.15px;font-size:14px;line-height:14px;color:#c8103b;letter-spacing:0.15px;-webkit-text-stroke:0.4px #c8103b;">30.01.2026</div>
<div class="t" style="left:1143.00px;top:969.15px;font-size:14px;line-height:14px;color:#1d1c29;">08.01.2026</div>
<div class="pill" style="top:964px;width:60px">Faktura</div>
<div class="abs" style="left:1396px;top:970px;width:12px;height:12px;border-radius:50%;background:#c8103b"></div>
<div class="t" style="left:1417.00px;top:969.15px;font-size:14px;line-height:14px;color:#1d1c29;letter-spacing:0.55px;">AutoPost feilet</div>
<div class="abs" style="left:1830.5px;top:968.20px;width:3px;height:3px;border-radius:50%;background:#2a2869"></div>
<div class="abs" style="left:1830.5px;top:974.50px;width:3px;height:3px;border-radius:50%;background:#2a2869"></div>
<div class="abs" style="left:1830.5px;top:980.80px;width:3px;height:3px;border-radius:50%;background:#2a2869"></div>
<div class="abs" style="left:6px;top:994px;width:1854px;height:1px;background:#f4f4f6"></div>
<div class="cb" style="top:1003px"></div>
<div class="t" style="left:65.50px;top:1005.15px;font-size:14px;line-height:14px;color:#1d1c29;">4</div>
<div class="t" style="left:191.50px;top:1005.15px;font-size:14px;line-height:14px;color:#1d1c29;">100004</div>
<div class="t" style="left:317.00px;top:1005.15px;font-size:14px;line-height:14px;color:#333070;letter-spacing:0.8px;"><span class="lk">Kari Nordmann</span></div>
<div class="t" style="right:1126.30px;top:1005.15px;font-size:14px;line-height:14px;color:#1d1c29;letter-spacing:0.15px;">6 250,00</div>
<div class="t" style="left:767.50px;top:1005.15px;font-size:14px;line-height:14px;color:#1d1c29;letter-spacing:0.8px;">NOK</div>
<div class="t" style="left:892.50px;top:1005.15px;font-size:14px;line-height:14px;color:#1d1c29;">07.01.2026</div>
<div class="t" style="left:1018.00px;top:1005.15px;font-size:14px;line-height:14px;color:#c8103b;letter-spacing:0.15px;-webkit-text-stroke:0.4px #c8103b;">21.01.2026</div>
<div class="t" style="left:1143.00px;top:1005.15px;font-size:14px;line-height:14px;color:#1d1c29;">07.01.2026</div>
<div class="pill" style="top:1000px;width:60px">Faktura</div>
<div class="abs" style="left:1396px;top:1006px;width:12px;height:12px;border-radius:50%;background:#c8103b"></div>
<div class="t" style="left:1417.00px;top:1005.15px;font-size:14px;line-height:14px;color:#1d1c29;letter-spacing:0.55px;">AutoPost feilet</div>
<div class="abs" style="left:1830.5px;top:1004.20px;width:3px;height:3px;border-radius:50%;background:#2a2869"></div>
<div class="abs" style="left:1830.5px;top:1010.50px;width:3px;height:3px;border-radius:50%;background:#2a2869"></div>
<div class="abs" style="left:1830.5px;top:1016.80px;width:3px;height:3px;border-radius:50%;background:#2a2869"></div>
<div class="abs" style="left:6px;top:1030px;width:1854px;height:1px;background:#f4f4f6"></div>
<div class="cb" style="top:1039px"></div>
<div class="t" style="left:65.50px;top:1041.15px;font-size:14px;line-height:14px;color:#1d1c29;">3</div>
<div class="t" style="left:191.50px;top:1041.15px;font-size:14px;line-height:14px;color:#1d1c29;">100003</div>
<div class="t" style="left:317.00px;top:1041.15px;font-size:14px;line-height:14px;color:#333070;letter-spacing:0.8px;"><span class="lk">Ola Nordmann</span></div>
<div class="t" style="right:1126.30px;top:1041.15px;font-size:14px;line-height:14px;color:#1d1c29;letter-spacing:0.15px;">6 250,00</div>
<div class="t" style="left:767.50px;top:1041.15px;font-size:14px;line-height:14px;color:#1d1c29;letter-spacing:0.8px;">NOK</div>
<div class="t" style="left:892.50px;top:1041.15px;font-size:14px;line-height:14px;color:#1d1c29;">07.01.2026</div>
<div class="t" style="left:1018.00px;top:1041.15px;font-size:14px;line-height:14px;color:#c8103b;letter-spacing:0.15px;-webkit-text-stroke:0.4px #c8103b;">21.01.2026</div>
<div class="t" style="left:1143.00px;top:1041.15px;font-size:14px;line-height:14px;color:#1d1c29;">07.01.2026</div>
<div class="pill" style="top:1036px;width:60px">Faktura</div>
<div class="abs" style="left:1396px;top:1042px;width:12px;height:12px;border-radius:50%;background:#c8103b"></div>
<div class="t" style="left:1417.00px;top:1041.15px;font-size:14px;line-height:14px;color:#1d1c29;letter-spacing:0.55px;">AutoPost feilet</div>
<div class="abs" style="left:1830.5px;top:1040.20px;width:3px;height:3px;border-radius:50%;background:#2a2869"></div>
<div class="abs" style="left:1830.5px;top:1046.50px;width:3px;height:3px;border-radius:50%;background:#2a2869"></div>
<div class="abs" style="left:1830.5px;top:1052.80px;width:3px;height:3px;border-radius:50%;background:#2a2869"></div>
<div class="abs" style="left:6px;top:1066px;width:1854px;height:1px;background:#f4f4f6"></div>
<div class="cb" style="top:1075px"></div>
<div class="t" style="left:65.50px;top:1077.15px;font-size:14px;line-height:14px;color:#1d1c29;">2</div>
<div class="t" style="left:191.50px;top:1077.15px;font-size:14px;line-height:14px;color:#1d1c29;">100002</div>
<div class="t" style="left:317.00px;top:1077.15px;font-size:14px;line-height:14px;color:#333070;letter-spacing:0.8px;"><span class="lk">Ola Nordmann</span></div>
<div class="t" style="right:1126.30px;top:1077.15px;font-size:14px;line-height:14px;color:#1d1c29;letter-spacing:0.15px;">6 250,00</div>
<div class="t" style="left:767.50px;top:1077.15px;font-size:14px;line-height:14px;color:#1d1c29;letter-spacing:0.8px;">NOK</div>
<div class="t" style="left:892.50px;top:1077.15px;font-size:14px;line-height:14px;color:#1d1c29;">07.01.2026</div>
<div class="t" style="left:1018.00px;top:1077.15px;font-size:14px;line-height:14px;color:#c8103b;letter-spacing:0.15px;-webkit-text-stroke:0.4px #c8103b;">21.01.2026</div>
<div class="t" style="left:1143.00px;top:1077.15px;font-size:14px;line-height:14px;color:#1d1c29;">07.01.2026</div>
<div class="pill" style="top:1072px;width:60px">Faktura</div>
<div class="abs" style="left:1396px;top:1078px;width:12px;height:12px;border-radius:50%;background:#c8103b"></div>
<div class="t" style="left:1417.00px;top:1077.15px;font-size:14px;line-height:14px;color:#1d1c29;letter-spacing:0.55px;">AutoPost feilet</div>
<div class="abs" style="left:1830.5px;top:1076.20px;width:3px;height:3px;border-radius:50%;background:#2a2869"></div>
<div class="abs" style="left:1830.5px;top:1082.50px;width:3px;height:3px;border-radius:50%;background:#2a2869"></div>
<div class="abs" style="left:1830.5px;top:1088.80px;width:3px;height:3px;border-radius:50%;background:#2a2869"></div>
<div class="abs" style="left:6px;top:1102px;width:1854px;height:1px;background:#f4f4f6"></div>
<div class="cb" style="top:1111px"></div>
<div class="t" style="left:65.50px;top:1113.15px;font-size:14px;line-height:14px;color:#1d1c29;">1</div>
<div class="t" style="left:191.50px;top:1113.15px;font-size:14px;line-height:14px;color:#1d1c29;">100001</div>
<div class="t" style="left:317.00px;top:1113.15px;font-size:14px;line-height:14px;color:#333070;letter-spacing:0.8px;"><span class="lk">Ola Nordmann</span></div>
<div class="t" style="right:1126.30px;top:1113.15px;font-size:14px;line-height:14px;color:#1d1c29;letter-spacing:0.15px;">6 250,00</div>
<div class="t" style="left:767.50px;top:1113.15px;font-size:14px;line-height:14px;color:#1d1c29;letter-spacing:0.8px;">NOK</div>
<div class="t" style="left:892.50px;top:1113.15px;font-size:14px;line-height:14px;color:#1d1c29;">07.01.2026</div>
<div class="t" style="left:1018.00px;top:1113.15px;font-size:14px;line-height:14px;color:#c8103b;letter-spacing:0.15px;-webkit-text-stroke:0.4px #c8103b;">21.01.2026</div>
<div class="t" style="left:1143.00px;top:1113.15px;font-size:14px;line-height:14px;color:#1d1c29;">07.01.2026</div>
<div class="pill" style="top:1108px;width:60px">Faktura</div>
<div class="abs" style="left:1396px;top:1114px;width:12px;height:12px;border-radius:50%;background:#c8103b"></div>
<div class="t" style="left:1417.00px;top:1113.15px;font-size:14px;line-height:14px;color:#1d1c29;letter-spacing:0.55px;">AutoPost feilet</div>
<div class="abs" style="left:1830.5px;top:1112.20px;width:3px;height:3px;border-radius:50%;background:#2a2869"></div>
<div class="abs" style="left:1830.5px;top:1118.50px;width:3px;height:3px;border-radius:50%;background:#2a2869"></div>
<div class="abs" style="left:1830.5px;top:1124.80px;width:3px;height:3px;border-radius:50%;background:#2a2869"></div>
<div class="abs" style="left:6px;top:1138px;width:1854px;height:1px;background:#f4f4f6"></div>
</body></html>
